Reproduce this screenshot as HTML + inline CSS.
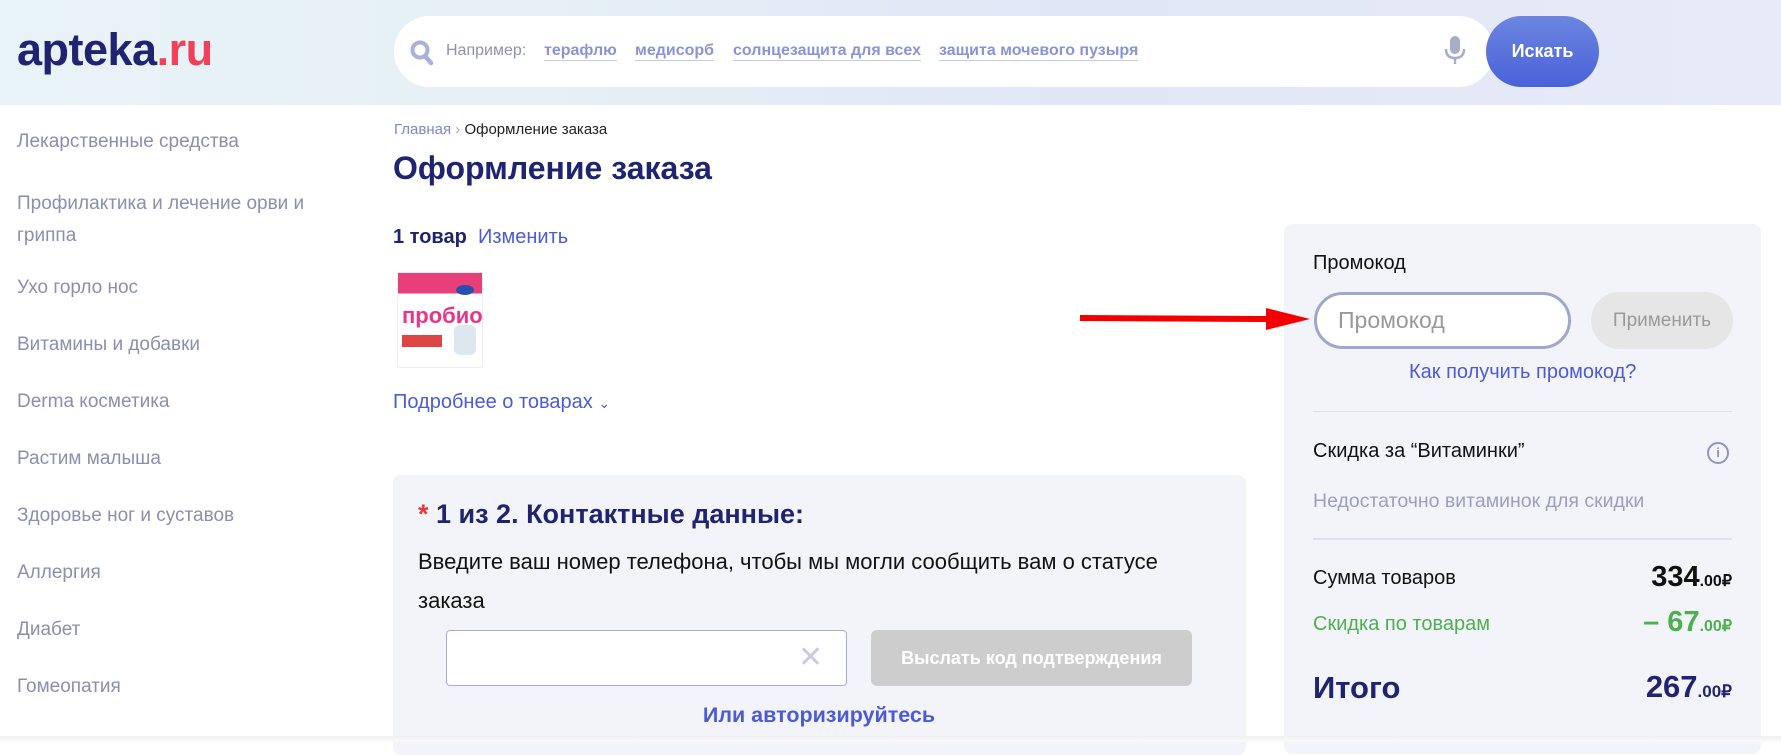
<!DOCTYPE html>
<html><head><meta charset="utf-8"><style>
*{margin:0;padding:0;box-sizing:border-box}
body{width:1781px;height:742px;overflow:hidden;background:#fff;font-family:"Liberation Sans",sans-serif;position:relative}
.a{position:absolute;white-space:nowrap}
.hdr{position:absolute;left:0;top:0;width:1781px;height:105px;background:linear-gradient(90deg,#e8f3f7 0%,#e6f0f6 30%,#e0e6f6 60%,#e8eaf8 100%)}
.side{color:#8a8fae;font-size:19px}
.navy{color:#1f2370}
.link{color:#4b5bd6}
</style></head><body>
<div class="hdr"></div>
<div class="a" style="left:17px;top:24px;font-size:45px;font-weight:bold;color:#1f2370;letter-spacing:-0.5px">apteka<span style="color:#f0405a">.ru</span></div>
<div class="a" style="left:394px;top:16px;width:1100px;height:71px;background:#fff;border-radius:36px"></div>
<svg class="a" style="left:410px;top:40px" width="24" height="26" viewBox="0 0 24 26"><circle cx="10" cy="10" r="7.5" fill="none" stroke="#a9b0dc" stroke-width="4"/><path d="M15 16l6 7" stroke="#a9b0dc" stroke-width="4.5" stroke-linecap="round"/></svg>
<div class="a" style="left:446px;top:42px;font-size:16px;color:#8d92ad">Например:</div>
<div class="a" style="left:544px;top:42px;font-size:16px;font-weight:bold;color:#8a93d8;border-bottom:1px solid #c5caef">терафлю</div>
<div class="a" style="left:635px;top:42px;font-size:16px;font-weight:bold;color:#8a93d8;border-bottom:1px solid #c5caef">медисорб</div>
<div class="a" style="left:733px;top:42px;font-size:16px;font-weight:bold;color:#8a93d8;border-bottom:1px solid #c5caef">солнцезащита для всех</div>
<div class="a" style="left:939px;top:42px;font-size:16px;font-weight:bold;color:#8a93d8;border-bottom:1px solid #c5caef">защита мочевого пузыря</div>
<svg class="a" style="left:1443px;top:34px" width="24" height="32" viewBox="0 0 24 32"><rect x="7" y="2" width="10" height="18" rx="5" fill="#a9acc8"/><path d="M3 15q0 9 9 9q9 0 9-9M12 24v6" stroke="#a9acc8" stroke-width="2.5" fill="none"/></svg>
<div class="a" style="left:1486px;top:16px;width:113px;height:71px;border-radius:36px;background:linear-gradient(180deg,#6b85e0,#4a62d8);color:#fff;font-weight:bold;font-size:18px;text-align:center;line-height:71px">Искать</div>

<div class="a side" style="left:17px;top:131px">Лекарственные средства</div>
<div class="a side" style="left:17px;top:188px;line-height:32px;white-space:normal;width:320px">Профилактика и лечение орви и гриппа</div>
<div class="a side" style="left:17px;top:277px">Ухо горло нос</div>
<div class="a side" style="left:17px;top:334px">Витамины и добавки</div>
<div class="a side" style="left:17px;top:391px">Derma косметика</div>
<div class="a side" style="left:17px;top:448px">Растим малыша</div>
<div class="a side" style="left:17px;top:505px">Здоровье ног и суставов</div>
<div class="a side" style="left:17px;top:562px">Аллергия</div>
<div class="a side" style="left:17px;top:619px">Диабет</div>
<div class="a side" style="left:17px;top:676px">Гомеопатия</div>

<div class="a" style="left:394px;top:121px;font-size:15px;color:#7d86c8">Главная <span style="color:#aaa">›</span> <span style="color:#222">Оформление заказа</span></div>
<div class="a navy" style="left:393px;top:150px;font-size:32px;font-weight:bold">Оформление заказа</div>
<div class="a" style="left:393px;top:226px;font-size:20px"><b class="navy">1 товар</b> &nbsp;<span class="link">Изменить</span></div>
<div class="a" style="left:397px;top:272px;width:86px;height:96px;background:linear-gradient(180deg,#e83e7a 0 22%,#fff 22% 100%);border:1px solid #eee">
<div class="a" style="left:4px;top:30px;font-size:22px;font-weight:bold;color:#e8358a">пробио</div>
<div class="a" style="left:4px;top:62px;width:40px;height:12px;background:#d44"></div>
<div class="a" style="left:56px;top:52px;width:22px;height:30px;background:#dde8ee;border-radius:6px"></div>
<div class="a" style="left:58px;top:12px;width:18px;height:10px;background:#2550b0;border-radius:50%"></div></div>
<div class="a link" style="left:393px;top:391px;font-size:20px">Подробнее о товарах <span style="font-size:14px">⌄</span></div>

<div class="a" style="left:393px;top:475px;width:853px;height:280px;background:#f3f4f9;border-radius:8px"></div>
<div class="a navy" style="left:418px;top:499px;font-size:27px;font-weight:bold"><span style="color:#e53935">*</span> 1 из 2. Контактные данные:</div>
<div class="a" style="left:418px;top:549px;font-size:22px;color:#111">Введите ваш номер телефона, чтобы мы могли сообщить вам о статусе</div>
<div class="a" style="left:418px;top:588px;font-size:22px;color:#111">заказа</div>
<div class="a" style="left:446px;top:630px;width:401px;height:56px;background:#fff;border:1.5px solid #a8acd0;border-radius:4px"></div>
<div class="a" style="left:798px;top:640px;font-size:30px;color:#c8cbe8">✕</div>
<div class="a" style="left:871px;top:630px;width:321px;height:56px;background:#cdcdcd;border-radius:6px;color:#fff;font-weight:bold;font-size:18px;text-align:center;line-height:56px">Выслать код подтверждения</div>
<div class="a link" style="left:619px;width:400px;text-align:center;top:703px;font-size:21.5px;font-weight:bold;color:#4b5bd6">Или авторизируйтесь</div>

<div class="a" style="left:1284px;top:224px;width:477px;height:530px;background:#f3f4f9;border-radius:8px"></div>
<div class="a" style="left:1313px;top:252px;font-size:20px;color:#111">Промокод</div>
<div class="a" style="left:1314px;top:292px;width:257px;height:57px;background:#fff;border:3px solid #a0a6cc;border-radius:29px;font-size:23px;color:#999;line-height:51px;padding-left:21px">Промокод</div>
<div class="a" style="left:1591px;top:292px;width:142px;height:57px;background:#e6e6e6;border-radius:29px;font-size:19px;color:#9a9a9a;text-align:center;line-height:57px">Применить</div>
<div class="a link" style="left:1409px;top:361px;font-size:20px">Как получить промокод?</div>
<div class="a" style="left:1313px;top:411px;width:419px;height:1px;background:#dcdff0"></div>
<div class="a" style="left:1313px;top:440px;font-size:20px;color:#111">Скидка за “Витаминки”</div>
<div class="a" style="left:1707px;top:442px;width:22px;height:22px;border:2px solid #8f95bb;border-radius:50%;color:#8f95bb;font-size:13px;font-weight:bold;text-align:center;line-height:18px">i</div>
<div class="a" style="left:1313px;top:490px;font-size:19.5px;color:#9a9fc2">Недостаточно витаминок для скидки</div>
<div class="a" style="left:1313px;top:538px;width:419px;height:1.5px;background:#dcdff0"></div>
<div class="a" style="left:1313px;top:567px;font-size:20px;color:#111">Сумма товаров</div>
<div class="a" style="right:49px;top:561px;font-size:29px;font-weight:bold;color:#111">334<span style="font-size:16px">.00₽</span></div>
<div class="a" style="left:1313px;top:613px;font-size:20px;color:#4caf50">Скидка по товарам</div>
<div class="a" style="right:49px;top:606px;font-size:29px;font-weight:bold;color:#4caf50">– 67<span style="font-size:16px">.00₽</span></div>
<div class="a navy" style="left:1313px;top:670px;font-size:31px;font-weight:bold">Итого</div>
<div class="a navy" style="right:49px;top:669px;font-size:31px;font-weight:bold">267<span style="font-size:17px">.00₽</span></div>

<svg class="a" style="left:1080px;top:302px" width="232" height="32" viewBox="0 0 232 32"><path d="M0 13L186 14L186 6L230 17L186 28L186 20L0 19Z" fill="#f50000"/></svg>
<div class="a" style="left:0;top:736px;width:1781px;height:6px;background:linear-gradient(#f0f0f0,#fafafa)"></div>
</body></html>
